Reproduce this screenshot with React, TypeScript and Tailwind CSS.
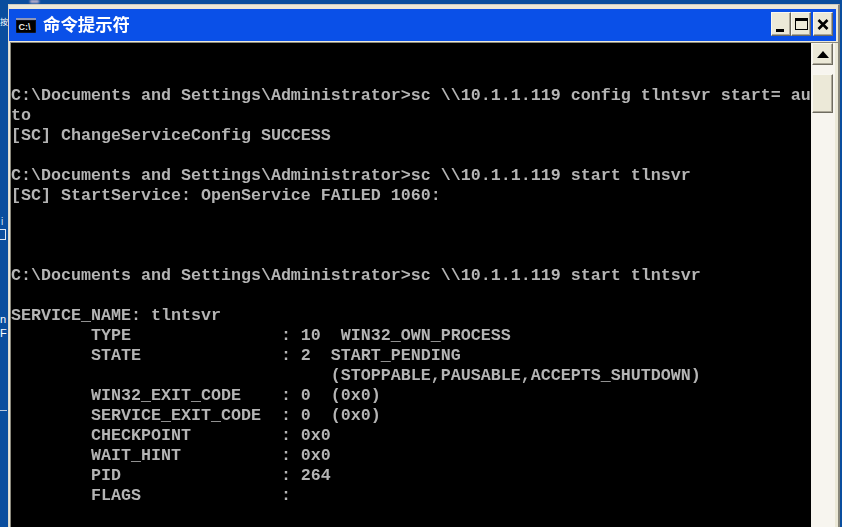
const lines = [
  "",
  "",
  "C:\\Documents and Settings\\Administrator>sc \\\\10.1.1.119 config tlntsvr start= au",
  "to",
  "[SC] ChangeServiceConfig SUCCESS",
  "",
  "C:\\Documents and Settings\\Administrator>sc \\\\10.1.1.119 start tlnsvr",
  "[SC] StartService: OpenService FAILED 1060:",
  "",
  "",
  "",
  "C:\\Documents and Settings\\Administrator>sc \\\\10.1.1.119 start tlntsvr",
  "",
  "SERVICE_NAME: tlntsvr",
  "        TYPE               : 10  WIN32_OWN_PROCESS",
  "        STATE              : 2  START_PENDING",
  "                                (STOPPABLE,PAUSABLE,ACCEPTS_SHUTDOWN)",
  "        WIN32_EXIT_CODE    : 0  (0x0)",
  "        SERVICE_EXIT_CODE  : 0  (0x0)",
  "        CHECKPOINT         : 0x0",
  "        WAIT_HINT          : 0x0",
  "        PID                : 264",
  "        FLAGS              :",
  "",
];

const bevel =
  "bg-[#ece9d8] border border-t-[#f8f7f0] border-l-[#f8f7f0] border-r-[#6f6c60] border-b-[#6f6c60] shadow-[inset_-1px_-1px_0_#aca899]";

function TitleButton({ children, className }: { children: React.ReactNode; className?: string }) {
  return (
    <div className={`w-[20px] h-[24px] flex items-center justify-center ${bevel} ${className ?? ""}`}>
      {children}
    </div>
  );
}

export default function App() {
  return (
    <div className="w-[842px] h-[527px] overflow-hidden bg-[#0a4e9e] pl-[8px] pr-[2px] pt-[4px] relative">
      <div className="absolute left-[30px] top-0 w-[9px] h-[3px] bg-[#c9b7cf] blur-[1px]" />
      <div className="absolute left-0 top-[18px] text-white text-[8px] leading-none font-['Noto_Sans_CJK_SC',sans-serif]">
        按
      </div>
      <div className="absolute left-[1px] top-[216px] text-[#d7e3f2] text-[10px] leading-[12px] font-['Liberation_Sans',sans-serif]">
        i
      </div>
      <div className="absolute left-0 top-[229px] w-[6px] h-[11px] border-t border-b border-r border-[#dfe8f4]" />
      <div className="absolute left-0 top-[312px] text-white text-[11px] leading-[14px] font-['Liberation_Sans',sans-serif]">
        <div>n</div>
        <div>F</div>
      </div>
      <div className="absolute left-0 top-[410px] w-[7px] h-[1px] bg-[#b9c8dc]" />
      <div className="h-full flex flex-col bg-[#ece9d8] border-l border-t border-l-[#dedbcf] border-t-[#cfcdc2] border-r-2 border-r-[#8a887c] pt-[4px]">
        <div className="h-[32px] shrink-0 bg-[#0a50e8] flex items-center pl-[7px] pr-[3px] mr-[2px]">
          <svg width="20" height="15" viewBox="0 0 20 15" className="shrink-0">
            <rect x="0" y="0" width="20" height="15" rx="1" fill="#10121c" />
            <rect x="0" y="0" width="20" height="2" fill="#8d96b8" />
            <rect x="1" y="3" width="18" height="11" fill="#000" />
            <text x="2.5" y="12" fontSize="9" fontWeight="700" fill="#e8e8e8" fontFamily="'Liberation Sans', sans-serif">C:\</text>
          </svg>
          <span className="ml-[7px] mb-[3px] text-[17.4px] leading-none font-bold text-white blur-[0.3px] font-['Noto_Sans_CJK_SC',sans-serif]">
            命令提示符
          </span>
          <div className="ml-auto mb-[2px] flex items-center">
            <TitleButton>
              <div className="w-[8px] h-[3px] bg-black mt-[12px] mr-[2px]" />
            </TitleButton>
            <TitleButton>
              <div className="w-[13px] h-[12px] border border-black border-t-[3px]" />
            </TitleButton>
            <TitleButton className="ml-[2px]">
              <svg width="12" height="11" viewBox="0 0 12 11">
                <path d="M1.5 1 L10.5 10 M10.5 1 L1.5 10" stroke="#000" strokeWidth="2.6" />
              </svg>
            </TitleButton>
          </div>
        </div>
        <div className="flex-1 mt-[1px] ml-[1px] flex min-h-0 border-t border-l border-t-[#8a887c] border-l-[#8a887c]">
          <div className="w-[800px] shrink-0 bg-black overflow-hidden pt-[3px]">
            {lines.map((l, i) => (
              <div
                key={i}
                className="h-[20px] leading-[20px] text-[16.67px] font-bold whitespace-pre text-[#b4b4b4] blur-[0.3px] font-['Liberation_Mono',monospace]"
              >
                {l}
              </div>
            ))}
          </div>
          <div className="w-[24px] shrink-0 flex flex-col bg-[#f7f5ef] pl-[1px] pr-[2px]">
            <div className={`h-[22px] shrink-0 flex items-center justify-center ${bevel}`}>
              <svg width="12" height="7" viewBox="0 0 12 7">
                <path d="M6 0 L12 7 L0 7 Z" fill="#000" />
              </svg>
            </div>
            <div className={`h-[39px] shrink-0 mt-[9px] ${bevel}`} />
          </div>
        </div>
      </div>
    </div>
  );
}
